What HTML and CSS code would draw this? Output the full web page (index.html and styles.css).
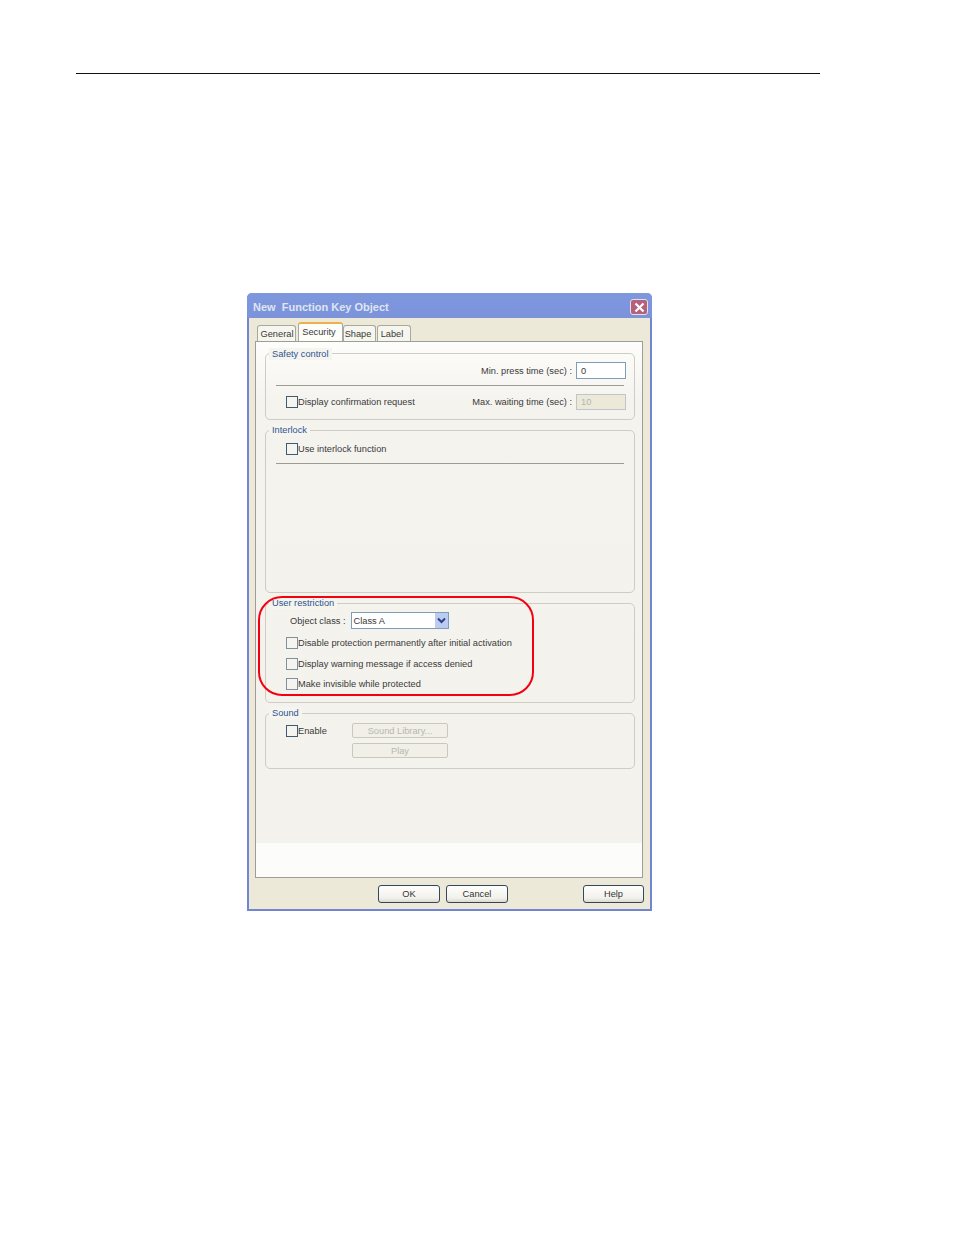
FILE: index.html
```html
<!DOCTYPE html>
<html lang="en">
<head>
<meta charset="utf-8">
<title>New Function Key Object</title>
<link rel="stylesheet" href="styles.css">
</head>
<body>
<div class="rule"></div>
<div class="dialog">
  <div class="titlebar">
    <span class="title">New&nbsp; Function Key Object</span>
    <span class="close"><svg width="13" height="13" viewBox="0 0 13 13"><path d="M2.5 2.5l8 8M10.500 2.500l-8 8" stroke="#fff" stroke-width="2.200" fill="none"/></svg></span>
  </div>
  <div class="client">
    <div class="tabs">
      <span class="tab tab-general">General</span>
      <span class="tab tab-active">Security</span>
      <span class="tab tab-shape">Shape</span>
      <span class="tab tab-label">Label</span>
    </div>
    <div class="panel">
      <section class="group group-safety">
        <span class="legend legend-safety">Safety control</span>
        <div class="row row-right row-min">
          <span>Min. press time (sec) :</span>
          <span class="input">0</span>
        </div>
        <div class="divider divider-safety"></div>
        <div class="row row-between">
          <label class="check"><i class="box"></i>Display confirmation request</label>
          <span class="row-inline">
            <span>Max. waiting time (sec) :</span>
            <span class="input input-disabled">10</span>
          </span>
        </div>
      </section>
      <section class="group group-interlock">
        <span class="legend">Interlock</span>
        <label class="check"><i class="box"></i>Use interlock function</label>
        <div class="divider divider-interlock"></div>
      </section>
      <section class="group group-user">
        <span class="legend">User restriction</span>
        <div class="row row-class">
          <span>Object class :</span>
          <span class="select">Class A<span class="arrow"><svg width="9" height="7" viewBox="0 0 9 7"><path d="M1 1.500l3.500 3.500 3.500-3.500" stroke="#2b3f8c" stroke-width="2" fill="none"/></svg></span></span>
        </div>
        <label class="check check-user"><i class="box"></i>Disable protection permanently after initial activation</label>
        <label class="check check-user"><i class="box"></i>Display warning message if access denied</label>
        <label class="check check-user"><i class="box"></i>Make invisible while protected</label>
      </section>
      <section class="group group-sound">
        <span class="legend">Sound</span>
        <div class="sound-grid">
          <label class="check"><i class="box"></i>Enable</label>
          <span class="btn-disabled">Sound Library...</span>
          <span class="btn-disabled btn-play">Play</span>
        </div>
      </section>
      <div class="panel-foot"></div>
    </div>
    <div class="actions">
      <span class="btn btn-ok">OK</span>
      <span class="btn btn-cancel">Cancel</span>
      <span class="btn btn-help">Help</span>
    </div>
  </div>
  <div class="highlight"></div>
</div>
</body>
</html>
```
FILE: styles.css
```css
* { box-sizing: border-box; }
html, body { margin: 0; padding: 0; background: #fff; }
body {
  height: 1235px;
  overflow: hidden;
  padding-top: 73px;
  font-family: "Liberation Sans", Arial, sans-serif;
  font-size: 9.25px;
  color: #3a3a3a;
}
.rule { width: 744px; height: 1px; margin-left: 76px; background: #111; }
.dialog {
  position: relative;
  width: 405px;
  height: 618px;
  margin: 219px 0 0 247px;
  background: #ece9d8;
  border: 2px solid #7285d0;
  border-top: 0;
  border-radius: 5px 5px 0 0;
}
.titlebar {
  display: flex;
  align-items: center;
  justify-content: space-between;
  height: 25px;
  margin: 0 -2px;
  padding: 3px 4px 0 6px;
  border-radius: 5px 5px 0 0;
  background: linear-gradient(#7f97dc 0, #7c95de 60%, #7d93d8 100%);
}
.title { font-size: 11px; font-weight: 700; color: #dfe5ee; white-space: pre; }
.close {
  display: flex;
  align-items: center;
  justify-content: center;
  width: 18px;
  height: 16px;
  border: 1px solid #e7dfe8;
  border-radius: 3px;
  background: #b5607c;
}
.client { padding: 0 7px 0 6px; }
.tabs { display: flex; align-items: flex-end; height: 23px; padding-left: 2px; }
.tab {
  display: flex;
  align-items: center;
  justify-content: center;
  height: 16px;
  margin-right: 1px;
  background: #f6f5ee;
  border: 1px solid #a6a99f;
  border-bottom: 0;
  border-radius: 3px 3px 0 0;
}
.tab-general { width: 39px; margin-right: 2px; padding-left: 1px; }
.tab-active {
  position: relative;
  z-index: 1;
  width: 45px;
  height: 19px;
  margin: 0;
  padding: 0 3px 2px 0;
  background: #fdfdfa;
  border-top: 2px solid #eeb04e;
}
.tab-shape { width: 33px; padding-right: 3px; }
.tab-label { width: 34px; padding-right: 4px; }
.panel {
  position: relative;
  height: 537px;
  padding: 11px 8px 0 9px;
  background: linear-gradient(#fdfdfb 0, #f5f3ee 60px, #f4f2ec 100%);
  border: 1px solid #9d9f96;
}
.group {
  position: relative;
  width: 370px;
  margin-bottom: 10px;
  border: 1px solid #cfcdc3;
  border-radius: 5px;
}
.legend {
  position: absolute;
  top: -7px;
  left: 3px;
  padding: 0 3px;
  line-height: 12px;
  color: #2d5590;
  background: #f6f4ef;
}
.legend-safety { top: -6px; }
.group-safety { height: 67px; }
.group-interlock { height: 163px; padding: 11px 0 0 20px; }
.group-user { height: 100px; padding-top: 8px; }
.group-sound { height: 56px; padding: 9px 0 0 20px; }
.row { display: flex; align-items: center; }
.row-right { justify-content: flex-end; gap: 4px; }
.row-min { height: 17px; margin: 8px 8px 0 0; }
.row-between { justify-content: space-between; height: 16px; margin: 8px 8px 0 20px; }
.row-inline { display: flex; align-items: center; gap: 4px; }
.row-class { gap: 5px; height: 17px; padding-left: 24px; }
.input {
  display: flex;
  align-items: center;
  width: 50px;
  height: 17px;
  padding-left: 4px;
  background: #fff;
  border: 1px solid #7f9db9;
}
.input-disabled { height: 16px; color: #b5b5ac; background: #ece9d8; border-color: #bcc6cc; }
.divider { height: 1px; background: #9c9c93; }
.divider-safety { margin: 6px 10px 0 10px; }
.divider-interlock { margin: 8px 10px 0 -10px; }
.check { display: flex; align-items: center; height: 13px; white-space: nowrap; }
.check-user { margin: 7.600px 0 0 20px; }
.box {
  flex: none;
  width: 12px;
  height: 12px;
  background: #f5f4ee;
  border: 1px solid #3f5a73;
}
.check-user .box { border-color: #8190a0; }
.select {
  position: relative;
  display: flex;
  align-items: center;
  width: 98px;
  height: 17px;
  padding-left: 2px;
  background: #fff;
  border: 1px solid #7f9db9;
}
.arrow {
  position: absolute;
  top: 0;
  right: 0;
  display: flex;
  align-items: center;
  justify-content: center;
  width: 13px;
  height: 15px;
  background: #bccbf0;
}
.sound-grid {
  display: grid;
  grid-template-columns: 66px 96px;
  grid-template-rows: 15px 15px;
  row-gap: 5px;
  align-items: center;
}
.btn-disabled {
  display: flex;
  align-items: center;
  justify-content: center;
  height: 15px;
  color: #b8b8ae;
  background: #f1efe7;
  border: 1px solid #c9c8bd;
  border-radius: 2px;
}
.btn-play { grid-column: 2; }
.panel-foot {
  position: absolute;
  right: 0;
  bottom: 0;
  left: 0;
  height: 34px;
  background: #fcfcfb;
}
.actions { display: flex; align-items: flex-start; padding: 7px 0 0 123px; }
.btn {
  flex: none;
  display: flex;
  align-items: center;
  justify-content: center;
  width: 62px;
  height: 18px;
  color: #333;
  background: linear-gradient(#fefefe, #f2f1ea 75%, #dcdad0);
  border: 1px solid #34485a;
  border-radius: 3px;
}
.btn-cancel { margin-left: 6px; }
.btn-help { width: 61px; margin-left: 75px; }
.highlight {
  position: absolute;
  top: 303px;
  left: 9px;
  width: 276px;
  height: 100px;
  border: 2px solid #f4000f;
  border-radius: 24px;
  pointer-events: none;
}
```
